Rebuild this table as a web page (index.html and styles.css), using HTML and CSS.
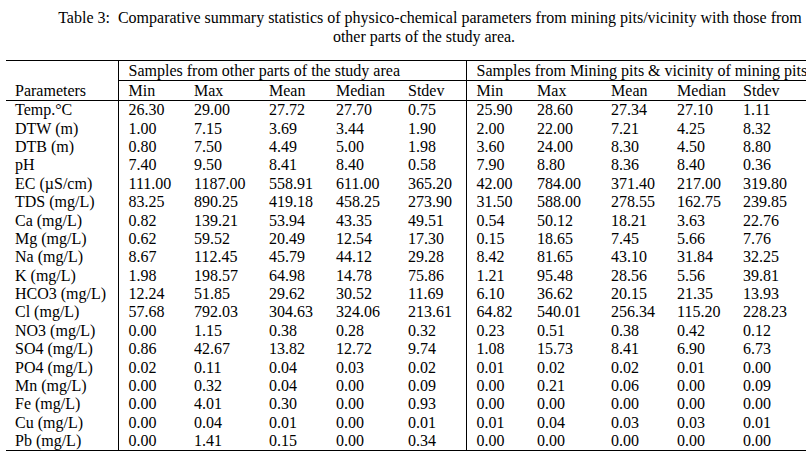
FILE: index.html
```html
<!DOCTYPE html>
<html lang="en">
<head>
<meta charset="utf-8">
<title>Table 3</title>
<link rel="stylesheet" href="styles.css">
</head>
<body>
<div class="caption">
  <div class="cap-line">Table 3:&nbsp; Comparative summary statistics of physico-chemical parameters from mining pits/vicinity with those from</div>
  <div class="cap-line cap-line2">other parts of the study area.</div>
</div>
<table class="stats">
  <colgroup>
    <col class="w-param"><col class="w-a1"><col class="w-a2"><col class="w-a3"><col class="w-a4"><col class="w-a5">
    <col class="w-b1"><col class="w-b2"><col class="w-b3"><col class="w-b4"><col class="w-b5">
  </colgroup>
  <thead>
    <tr class="hdr1">
      <th rowspan="2" class="param">Parameters</th>
      <th colspan="5" class="grp">Samples from other parts of the study area</th>
      <th colspan="5" class="grp sep">Samples from Mining pits &amp; vicinity of mining pits</th>
    </tr>
    <tr class="hdr2">
      <th>Min</th><th>Max</th><th>Mean</th><th>Median</th><th>Stdev</th>
      <th class="sep">Min</th><th>Max</th><th>Mean</th><th>Median</th><th>Stdev</th>
    </tr>
  </thead>
  <tbody>
    <tr><td class="param">Temp.°C</td><td>26.30</td><td>29.00</td><td>27.72</td><td>27.70</td><td>0.75</td><td class="sep">25.90</td><td>28.60</td><td>27.34</td><td>27.10</td><td>1.11</td></tr>
    <tr><td class="param">DTW (m)</td><td>1.00</td><td>7.15</td><td>3.69</td><td>3.44</td><td>1.90</td><td class="sep">2.00</td><td>22.00</td><td>7.21</td><td>4.25</td><td>8.32</td></tr>
    <tr><td class="param">DTB (m)</td><td>0.80</td><td>7.50</td><td>4.49</td><td>5.00</td><td>1.98</td><td class="sep">3.60</td><td>24.00</td><td>8.30</td><td>4.50</td><td>8.80</td></tr>
    <tr><td class="param">pH</td><td>7.40</td><td>9.50</td><td>8.41</td><td>8.40</td><td>0.58</td><td class="sep">7.90</td><td>8.80</td><td>8.36</td><td>8.40</td><td>0.36</td></tr>
    <tr><td class="param">EC (µS/cm)</td><td>111.00</td><td>1187.00</td><td>558.91</td><td>611.00</td><td>365.20</td><td class="sep">42.00</td><td>784.00</td><td>371.40</td><td>217.00</td><td>319.80</td></tr>
    <tr><td class="param">TDS (mg/L)</td><td>83.25</td><td>890.25</td><td>419.18</td><td>458.25</td><td>273.90</td><td class="sep">31.50</td><td>588.00</td><td>278.55</td><td>162.75</td><td>239.85</td></tr>
    <tr><td class="param">Ca (mg/L)</td><td>0.82</td><td>139.21</td><td>53.94</td><td>43.35</td><td>49.51</td><td class="sep">0.54</td><td>50.12</td><td>18.21</td><td>3.63</td><td>22.76</td></tr>
    <tr><td class="param">Mg (mg/L)</td><td>0.62</td><td>59.52</td><td>20.49</td><td>12.54</td><td>17.30</td><td class="sep">0.15</td><td>18.65</td><td>7.45</td><td>5.66</td><td>7.76</td></tr>
    <tr><td class="param">Na (mg/L)</td><td>8.67</td><td>112.45</td><td>45.79</td><td>44.12</td><td>29.28</td><td class="sep">8.42</td><td>81.65</td><td>43.10</td><td>31.84</td><td>32.25</td></tr>
    <tr><td class="param">K (mg/L)</td><td>1.98</td><td>198.57</td><td>64.98</td><td>14.78</td><td>75.86</td><td class="sep">1.21</td><td>95.48</td><td>28.56</td><td>5.56</td><td>39.81</td></tr>
    <tr><td class="param">HCO3 (mg/L)</td><td>12.24</td><td>51.85</td><td>29.62</td><td>30.52</td><td>11.69</td><td class="sep">6.10</td><td>36.62</td><td>20.15</td><td>21.35</td><td>13.93</td></tr>
    <tr><td class="param">Cl (mg/L)</td><td>57.68</td><td>792.03</td><td>304.63</td><td>324.06</td><td>213.61</td><td class="sep">64.82</td><td>540.01</td><td>256.34</td><td>115.20</td><td>228.23</td></tr>
    <tr><td class="param">NO3 (mg/L)</td><td>0.00</td><td>1.15</td><td>0.38</td><td>0.28</td><td>0.32</td><td class="sep">0.23</td><td>0.51</td><td>0.38</td><td>0.42</td><td>0.12</td></tr>
    <tr><td class="param">SO4 (mg/L)</td><td>0.86</td><td>42.67</td><td>13.82</td><td>12.72</td><td>9.74</td><td class="sep">1.08</td><td>15.73</td><td>8.41</td><td>6.90</td><td>6.73</td></tr>
    <tr><td class="param">PO4 (mg/L)</td><td>0.02</td><td>0.11</td><td>0.04</td><td>0.03</td><td>0.02</td><td class="sep">0.01</td><td>0.02</td><td>0.02</td><td>0.01</td><td>0.00</td></tr>
    <tr><td class="param">Mn (mg/L)</td><td>0.00</td><td>0.32</td><td>0.04</td><td>0.00</td><td>0.09</td><td class="sep">0.00</td><td>0.21</td><td>0.06</td><td>0.00</td><td>0.09</td></tr>
    <tr><td class="param">Fe (mg/L)</td><td>0.00</td><td>4.01</td><td>0.30</td><td>0.00</td><td>0.93</td><td class="sep">0.00</td><td>0.00</td><td>0.00</td><td>0.00</td><td>0.00</td></tr>
    <tr><td class="param">Cu (mg/L)</td><td>0.00</td><td>0.04</td><td>0.01</td><td>0.00</td><td>0.01</td><td class="sep">0.01</td><td>0.04</td><td>0.03</td><td>0.03</td><td>0.01</td></tr>
    <tr><td class="param">Pb (mg/L)</td><td>0.00</td><td>1.41</td><td>0.15</td><td>0.00</td><td>0.34</td><td class="sep">0.00</td><td>0.00</td><td>0.00</td><td>0.00</td><td>0.00</td></tr>
  </tbody>
</table>
</body>
</html>
```

FILE: styles.css
```css
html, body {
  overflow: hidden;
}
body {
  margin: 0;
  padding: 8px 0 0;
  background: #fff;
  color: #000;
  font-family: "Liberation Serif", "Times New Roman", serif;
  font-size: 16px;
}
.caption {
  width: 848px;
  margin-left: 6px;
  text-align: center;
  line-height: 19px;
}
.cap-line {
  white-space: nowrap;
}
.cap-line2 {
  padding-right: 12px;
}
.stats {
  margin-top: 14px;
  margin-left: 6px;
  border-collapse: collapse;
  table-layout: fixed;
  width: 807px;
  border-top: 1px solid #000;
  border-bottom: 1px solid #000;
}
.w-param { width: 112px; }
.w-a1 { width: 66px; }
.w-a2 { width: 75px; }
.w-a3 { width: 67px; }
.w-a4 { width: 72px; }
.w-a5 { width: 68px; }
.w-b1 { width: 61px; }
.w-b2 { width: 74px; }
.w-b3 { width: 66px; }
.w-b4 { width: 66px; }
.w-b5 { width: 80px; }
.stats th,
.stats td {
  padding: 0 0 0 10px;
  text-align: left;
  font-weight: normal;
  white-space: nowrap;
  line-height: 18px;
  height: 18.4px;
  vertical-align: middle;
}
.stats .param {
  padding-left: 9px;
  border-right: 1px solid #000;
}
.stats th.param {
  vertical-align: bottom;
  border-bottom: 1px solid #000;
}
.stats .sep {
  border-left: 1px solid #000;
}
.hdr1 th,
.hdr2 th {
  height: 19px;
}
.hdr1 .grp {
  border-bottom: 1px solid #000;
  overflow: visible;
}
.hdr2 th {
  border-bottom: 1px solid #000;
}
```
